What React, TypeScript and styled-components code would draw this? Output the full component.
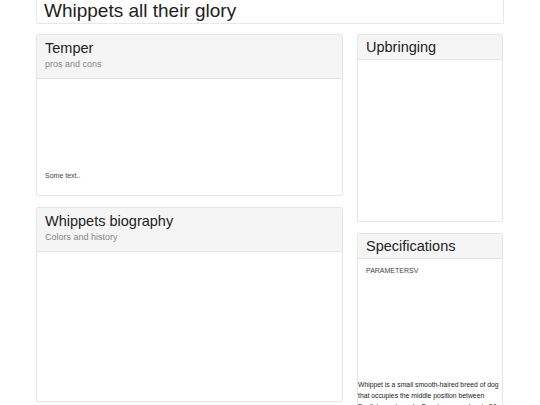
import React from 'react'
import styled, { createGlobalStyle } from 'styled-components';

const Global = createGlobalStyle`
    html, body {
        margin: 0;
        padding: 0;
        background: #fff;
        font-family: "Liberation Sans", Arial, sans-serif;
        color: #333;
        overflow: hidden;
    }
`;

const Page = styled.div`
    width: 468px;
    margin-left: 36px;
    height: 405px;
    overflow: hidden;
`;

const TitleBar = styled.div`
    height: 23px;
    border: 1px solid #e8e8e8;
    border-top: none;
    border-radius: 0 0 2px 2px;
    padding-left: 7px;
    font-size: 19px;
    line-height: 22px;
    color: #222;
`;

const Columns = styled.div`
    display: grid;
    grid-template-columns: 307px 146px;
    column-gap: 14px;
    margin-top: 10px;
    align-items: start;
`;

const Stack = styled.div`
    display: flex;
    flex-direction: column;
    gap: 11px;
`;

const Panel = styled.section<{ $height: number }>`
    height: ${p => p.$height}px;
    border: 1px solid #e6e6e6;
    border-radius: 2px;
    display: flex;
    flex-direction: column;
    box-sizing: border-box;
`;

const Head = styled.header<{ $tall?: boolean }>`
    background: #f5f5f5;
    border-bottom: 1px solid #e3e3e3;
    height: ${p => (p.$tall ? 44 : 25)}px;
    padding: ${p => (p.$tall ? '5px' : '4px')} 8px 0;
    box-sizing: border-box;
    flex-shrink: 0;
`;

const HeadTitle = styled.h3`
    margin: 0;
    font-weight: normal;
    font-size: 14.5px;
    line-height: 16px;
    color: #222;
`;

const Sub = styled.div`
    margin-top: 3px;
    font-size: 9px;
    color: #888;
`;

const Body = styled.div<{ $bottom?: boolean }>`
    flex: 1;
    display: flex;
    flex-direction: column;
    justify-content: ${p => (p.$bottom ? 'flex-end' : 'flex-start')};
    padding: 9px 8px 16px;
`;

const Small = styled.div`
    font-size: 7px;
    color: #444;
`;

const SpecBody = styled.div`
    flex: 1;
    padding: 8px 0 0;
    font-size: 7px;
    color: #444;
`;

const Params = styled.div`
    padding-left: 8px;
`;

const Desc = styled.p`
    margin: 105px 0 0;
    font-size: 6.8px;
    line-height: 11px;
    color: #222;
    padding-right: 2px;
`;

const App: React.FC = () => {
    return (
        <>
            <Global />
            <Page>
                <TitleBar>Whippets all their glory</TitleBar>
                <Columns>
                    <Stack>
                        <Panel $height={162}>
                            <Head $tall>
                                <HeadTitle>Temper</HeadTitle>
                                <Sub>pros and cons</Sub>
                            </Head>
                            <Body $bottom>
                                <Small>Some text..</Small>
                            </Body>
                        </Panel>
                        <Panel $height={195}>
                            <Head $tall>
                                <HeadTitle>Whippets biography</HeadTitle>
                                <Sub>Colors and history</Sub>
                            </Head>
                            <Body />
                        </Panel>
                    </Stack>
                    <Stack>
                        <Panel $height={188}>
                            <Head>
                                <HeadTitle>Upbringing</HeadTitle>
                            </Head>
                            <Body />
                        </Panel>
                        <Panel $height={200}>
                            <Head>
                                <HeadTitle>Specifications</HeadTitle>
                            </Head>
                            <SpecBody>
                                <Params>PARAMETERSV</Params>
                                <Desc>
                                    Whippet is a small smooth-haired breed of dog that occupies the middle position between English greyhounds. Develops speed up to 50 km/h.
                                </Desc>
                            </SpecBody>
                        </Panel>
                    </Stack>
                </Columns>
            </Page>
        </>
    )
}

export default App
